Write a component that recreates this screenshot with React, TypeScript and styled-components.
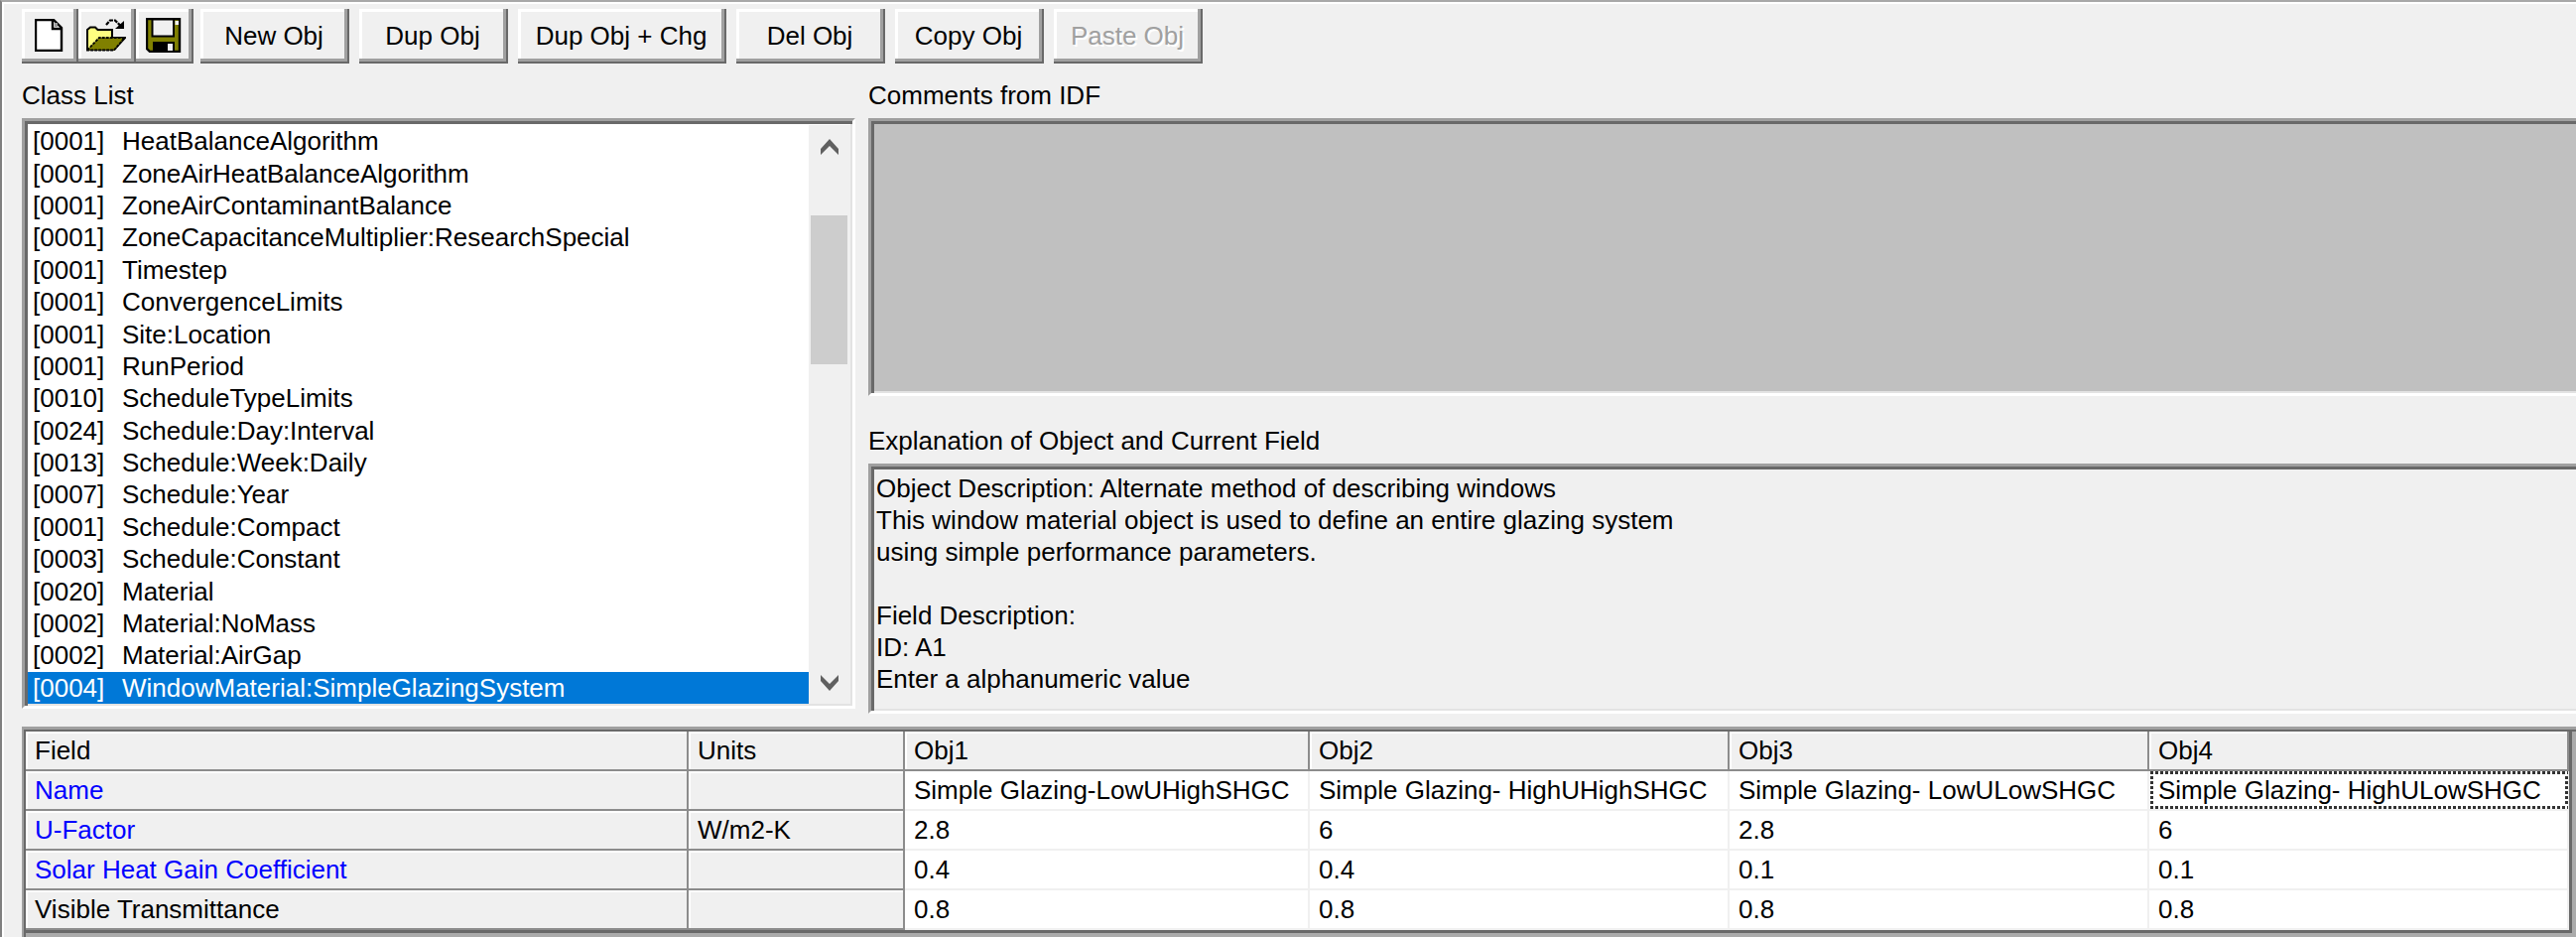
import React, { useState } from 'react';
import styled, { createGlobalStyle, css } from 'styled-components';

const face = '#f0f0f0';
const shadow = '#a0a0a0';
const darkShadow = '#696969';
const highlight = '#ffffff';

const GlobalStyle = createGlobalStyle`
  *, *::before, *::after { box-sizing: border-box; }
  body {
    margin: 0;
    background: ${face};
    color: #000;
    font-family: "Liberation Sans", Arial, sans-serif;
    font-size: 26px;
    line-height: 32px;
  }
`;

const sunken = css`
  border-style: solid;
  border-width: 3px;
  border-color: ${shadow} ${highlight} ${highlight} ${shadow};
  box-shadow: inset 3px 3px ${darkShadow}, inset -2px -2px #e3e3e3;
`;

/* Sunken panel that runs on past the right edge of the window. */
const sunkenOpen = css`
  ${sunken}
  border-right: 0;
  box-shadow: inset 3px 3px ${darkShadow}, inset 0 -2px #e3e3e3;
`;

const Window = styled.main`
  display: flex;
  flex-direction: column;
  min-height: 100vh;
  padding: 7px 0 0 20px;
  border-top: 2px solid #a8a8a8;
  border-left: 2px solid #808080;
  box-shadow: inset 2px 2px ${highlight};
`;

const Toolbar = styled.div`
  display: flex;
  gap: 10px;
  height: 55px;
`;

const IconGroup = styled.div`
  display: flex;
  margin-right: -3px;
`;

const Button = styled.button<{ $width: number }>`
  display: flex;
  align-items: center;
  justify-content: center;
  width: ${(p) => p.$width}px;
  padding: 0 2px 2px 0;
  border: 0;
  background: ${face};
  color: #000;
  font: inherit;
  white-space: nowrap;
  box-shadow: inset -2px -2px ${darkShadow}, inset -5px -5px ${shadow}, inset 3px 3px ${highlight};

  &:disabled {
    color: ${shadow};
    text-shadow: 2px 2px ${highlight};
  }
`;

const Panes = styled.div`
  display: grid;
  grid-template-columns: minmax(0, 840px) minmax(0, 1fr);
  column-gap: 13px;
  margin-top: 16px;
`;

const Pane = styled.section`
  display: flex;
  flex-direction: column;
`;

const Label = styled.label`
  margin-bottom: 7px;
`;

const ListFrame = styled.div`
  ${sunken}
  display: flex;
  height: 595px;
  padding: 4px 2px 2px 3px;
  background: #fff;
`;

const List = styled.ul`
  display: flex;
  flex: 1;
  flex-direction: column;
  margin: 0;
  padding: 0;
  list-style: none;
`;

const ListItem = styled.li<{ $selected: boolean }>`
  display: flex;
  flex: 1;
  align-items: center;
  min-height: 0;
  padding-left: 5px;
  white-space: nowrap;
  cursor: default;
  background: ${(p) => (p.$selected ? '#0078d7' : 'transparent')};
  color: ${(p) => (p.$selected ? '#fff' : '#000')};
`;

const Count = styled.span`
  width: 90px;
`;

const ScrollBar = styled.div`
  display: flex;
  flex-direction: column;
  width: 42px;
  padding: 0 3px 0 2px;
  background: ${face};
`;

const ScrollButton = styled.button`
  display: flex;
  align-items: center;
  justify-content: center;
  height: 43px;
  padding: 0;
  border: 0;
  background: ${face};
`;

const Track = styled.div`
  flex: 1;
  padding-top: 48px;
`;

const Thumb = styled.div`
  height: 150px;
  background: #cdcdcd;
`;

const Comments = styled.textarea`
  ${sunkenOpen}
  display: block;
  width: 100%;
  height: 280px;
  margin-bottom: 29px;
  padding: 5px 6px;
  border-radius: 0;
  outline: 0;
  resize: none;
  background: #c0c0c0;
  font: inherit;
`;

const Explanation = styled.output`
  ${sunkenOpen}
  display: block;
  height: 252px;
  padding: 6px 5px;
  white-space: pre-line;
`;

const GridFrame = styled.section`
  flex: 1;
  margin-top: 13px;
  padding: 2px 4px 4px 2px;
  border-top: 3px solid ${shadow};
  border-left: 2px solid ${shadow};
  background: #ababab;
  box-shadow: inset 2px 2px ${darkShadow};
`;

const Table = styled.table`
  width: 100%;
  table-layout: fixed;
  border-collapse: separate;
  border-spacing: 0;
  border-right: 3px solid ${darkShadow};
  border-bottom: 3px solid ${darkShadow};
`;

const Col = styled.col<{ $width: number }>`
  width: ${(p) => p.$width}px;
`;

const FixedCell = styled.th<{ $blue?: boolean }>`
  height: 40px;
  padding: 0 9px;
  border-right: 2px solid #8c8c8c;
  border-bottom: 2px solid #8c8c8c;
  background: ${face};
  box-shadow: inset 2px 2px ${highlight};
  color: ${(p) => (p.$blue ? '#0000ff' : '#000')};
  font-weight: 400;
  text-align: left;
  white-space: nowrap;
`;

const DataCell = styled.td<{ $focused: boolean }>`
  position: relative;
  height: 40px;
  padding: 0 9px;
  border-right: 2px solid ${face};
  border-bottom: 2px solid ${face};
  background: #fff;
  white-space: nowrap;

  ${(p) =>
    p.$focused &&
    css`
      &::after {
        content: '';
        position: absolute;
        inset: 0 -1px 0 1px;
        background:
          repeating-linear-gradient(90deg, #333 0 3px, #fff 3px 5px) top / 100% 3px no-repeat,
          repeating-linear-gradient(90deg, #333 0 3px, #fff 3px 5px) bottom / 100% 3px no-repeat,
          repeating-linear-gradient(#333 0 3px, #fff 3px 5px) left / 3px 100% no-repeat,
          repeating-linear-gradient(#333 0 3px, #fff 3px 5px) right / 3px 100% no-repeat;
      }
    `}
`;

const NewIcon = () => (
  <svg width="30" height="33" viewBox="0 0 30 33" aria-hidden="true">
    <path d="M1 1H19L27 9V32H1Z" fill="#fff" stroke="#000" strokeWidth="2.4" />
    <path d="M18 1V10H27" fill="none" stroke="#000" strokeWidth="2.4" />
    <path d="M20 4h3v4h-3z" fill="#999" />
  </svg>
);

const OpenIcon = () => (
  <svg width="40" height="33" viewBox="0 0 40 33" aria-hidden="true">
    <path d="M1 31V11L4 8.500H9L11.500 11H26V19H39L28 31Z" fill="#ffff80" stroke="#000" strokeWidth="2" />
    <path d="M1 31.500L13 19H38.500L28 31.500Z" fill="#808000" stroke="#000" strokeWidth="1.800" strokeDasharray="3 1" />
    <path d="M20 6L24 1.500H29L35 7.500" fill="none" stroke="#000" strokeWidth="2.200" strokeDasharray="4 1" />
    <path d="M38 2V10H29Z" fill="#000" />
  </svg>
);

const SaveIcon = () => (
  <svg width="36" height="35" viewBox="0 0 36 35" aria-hidden="true">
    <path d="M1 1H34V34H4L1 31Z" fill="#808000" stroke="#000" strokeWidth="2.400" />
    <path d="M6.500 1.500H28V18.500H6.500Z" fill="#f0f0f0" stroke="#000" strokeWidth="2" />
    <path d="M29.500 3H33V7H29.500Z" fill="#f0f0f0" />
    <path d="M7 24H29V34H7Z" fill="#000" />
    <path d="M22 26H27V33H22Z" fill="#f0f0f0" />
  </svg>
);

const Chevron = ({ down = false }: { down?: boolean }) => (
  <svg width="18" height="16" viewBox="0 0 18 16" aria-hidden="true">
    <path
      d={down ? 'M0 0L9 9L18 0V6L9 16L0 6Z' : 'M0 16L9 7L18 16V10L9 0L0 10Z'}
      fill="#606060"
    />
  </svg>
);

const fileActions = [
  { name: 'New file', width: 57, icon: <NewIcon /> },
  { name: 'Open file', width: 58, icon: <OpenIcon /> },
  { name: 'Save file', width: 58, icon: <SaveIcon /> },
];

const objectActions = [
  { text: 'New Obj', width: 150 },
  { text: 'Dup Obj', width: 150 },
  { text: 'Dup Obj + Chg', width: 210 },
  { text: 'Del Obj', width: 150 },
  { text: 'Copy Obj', width: 150 },
  { text: 'Paste Obj', width: 150, disabled: true },
];

const classes: [string, string][] = [
  ['0001', 'HeatBalanceAlgorithm'],
  ['0001', 'ZoneAirHeatBalanceAlgorithm'],
  ['0001', 'ZoneAirContaminantBalance'],
  ['0001', 'ZoneCapacitanceMultiplier:ResearchSpecial'],
  ['0001', 'Timestep'],
  ['0001', 'ConvergenceLimits'],
  ['0001', 'Site:Location'],
  ['0001', 'RunPeriod'],
  ['0010', 'ScheduleTypeLimits'],
  ['0024', 'Schedule:Day:Interval'],
  ['0013', 'Schedule:Week:Daily'],
  ['0007', 'Schedule:Year'],
  ['0001', 'Schedule:Compact'],
  ['0003', 'Schedule:Constant'],
  ['0020', 'Material'],
  ['0002', 'Material:NoMass'],
  ['0002', 'Material:AirGap'],
  ['0004', 'WindowMaterial:SimpleGlazingSystem'],
];

const explanation = `Object Description: Alternate method of describing windows
This window material object is used to define an entire glazing system
using simple performance parameters.

Field Description:
ID: A1
Enter a alphanumeric value`;

const columnWidths = [668, 218, 408, 423, 423, 423];
const headers = ['Field', 'Units', 'Obj1', 'Obj2', 'Obj3', 'Obj4'];

const fields = [
  {
    name: 'Name',
    units: '',
    required: true,
    values: [
      'Simple Glazing-LowUHighSHGC',
      'Simple Glazing- HighUHighSHGC',
      'Simple Glazing- LowULowSHGC',
      'Simple Glazing- HighULowSHGC',
    ],
  },
  { name: 'U-Factor', units: 'W/m2-K', required: true, values: ['2.8', '6', '2.8', '6'] },
  { name: 'Solar Heat Gain Coefficient', units: '', required: true, values: ['0.4', '0.4', '0.1', '0.1'] },
  { name: 'Visible Transmittance', units: '', required: false, values: ['0.8', '0.8', '0.8', '0.8'] },
];

export default function App() {
  const [selected, setSelected] = useState(classes.length - 1);
  const [focus, setFocus] = useState({ row: 0, col: 3 });

  return (
    <>
      <GlobalStyle />
      <Window>
        <Toolbar role="toolbar">
          <IconGroup>
            {fileActions.map((a) => (
              <Button key={a.name} $width={a.width} aria-label={a.name}>
                {a.icon}
              </Button>
            ))}
          </IconGroup>
          {objectActions.map((a) => (
            <Button key={a.text} $width={a.width} disabled={a.disabled}>
              {a.text}
            </Button>
          ))}
        </Toolbar>

        <Panes>
          <Pane>
            <Label as="span" id="class-list-label">Class List</Label>
            <ListFrame>
              <List role="listbox" aria-labelledby="class-list-label">
                {classes.map(([count, name], i) => (
                  <ListItem
                    key={name}
                    role="option"
                    aria-selected={i === selected}
                    $selected={i === selected}
                    onClick={() => setSelected(i)}
                  >
                    <Count>[{count}]</Count>
                    {name}
                  </ListItem>
                ))}
              </List>
              <ScrollBar>
                <ScrollButton aria-label="Scroll up">
                  <Chevron />
                </ScrollButton>
                <Track>
                  <Thumb />
                </Track>
                <ScrollButton aria-label="Scroll down">
                  <Chevron down />
                </ScrollButton>
              </ScrollBar>
            </ListFrame>
          </Pane>

          <Pane>
            <Label htmlFor="comments">Comments from IDF</Label>
            <Comments id="comments" readOnly />
            <Label htmlFor="explanation">Explanation of Object and Current Field</Label>
            <Explanation id="explanation">{explanation}</Explanation>
          </Pane>
        </Panes>

        <GridFrame>
          <Table>
            <colgroup>
              {columnWidths.map((w, i) => (
                <Col key={i} $width={w} />
              ))}
            </colgroup>
            <thead>
              <tr>
                {headers.map((h) => (
                  <FixedCell key={h} scope="col">{h}</FixedCell>
                ))}
              </tr>
            </thead>
            <tbody>
              {fields.map((f, row) => (
                <tr key={f.name}>
                  <FixedCell scope="row" $blue={f.required}>{f.name}</FixedCell>
                  <FixedCell as="td">{f.units}</FixedCell>
                  {f.values.map((v, col) => (
                    <DataCell
                      key={col}
                      $focused={focus.row === row && focus.col === col}
                      onClick={() => setFocus({ row, col })}
                    >
                      {v}
                    </DataCell>
                  ))}
                </tr>
              ))}
            </tbody>
          </Table>
        </GridFrame>
      </Window>
    </>
  );
}
